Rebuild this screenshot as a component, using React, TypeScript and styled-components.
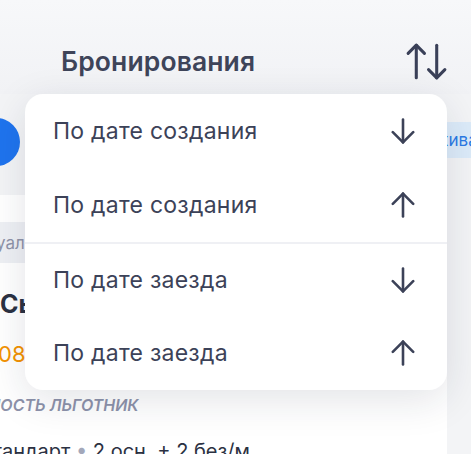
import styled, { createGlobalStyle } from 'styled-components'
import { ArrowUpDown } from 'lucide-react'

const GlobalStyle = createGlobalStyle`
  html, body {
    margin: 0;
    padding: 0;
  }
  body {
    background: #f4f5f7;
    font-family: Inter, 'Noto Sans', sans-serif;
    -webkit-font-smoothing: antialiased;
  }
`

const Screen = styled.div`
  position: relative;
  width: 471px;
  height: 454px;
  overflow: hidden;
  background: #f3f4f6;
`

const Header = styled.header`
  height: 94px;
  box-sizing: border-box;
  padding: 28px 20px 0 61px;
  display: flex;
  align-items: center;
  justify-content: space-between;
  background: linear-gradient(#f7f8fa, #f1f2f5);
`

const Title = styled.h1`
  margin: 0;
  font-size: 26.5px;
  font-weight: 600;
  letter-spacing: 0.1px;
  color: #3e4459;
`

const SortButton = styled.button`
  border: 0;
  padding: 0;
  background: none;
  color: #3a4058;
  display: flex;
`

const FilterRow = styled.div`
  height: 96px;
  display: flex;
  align-items: center;
  justify-content: space-between;
`

const Avatar = styled.div`
  width: 48px;
  height: 48px;
  margin-left: -28px;
  border-radius: 50%;
  background: #1f74ee;
`

const Chip = styled.div`
  height: 36px;
  display: flex;
  align-items: center;
  padding: 0 12px;
  margin-right: -41px;
  margin-top: -4px;
  border-radius: 10px;
  background: #dcebf9;
  color: #2c7be5;
  font-size: 17px;
  white-space: nowrap;
`

const Card = styled.section`
  width: 447px;
  margin-top: 5px;
  padding-top: 27px;
  background: #fff;
  overflow: hidden;
`

const GroupLabel = styled.div`
  height: 41px;
  display: flex;
  align-items: center;
  background: #eef0f4;
  color: #8e93a8;
  font-size: 17px;
  white-space: nowrap;
`

const Body = styled.div`
  padding-top: 24px;
  display: flex;
  flex-direction: column;
  white-space: nowrap;
`

const Shifted = styled.span<{ $shift: number }>`
  margin-left: ${(p) => p.$shift}px;
`

const Dot = styled.span`
  color: #a3a8ba;
`

const Name = styled.div`
  font-size: 25px;
  line-height: 34px;
  font-weight: 700;
  color: #2b3142;
`

const Time = styled.div`
  margin-top: 19px;
  font-size: 22px;
  line-height: 28px;
  color: #f39200;
`

const Tag = styled.div`
  margin-top: 26px;
  font-size: 16px;
  line-height: 22px;
  font-weight: 600;
  font-style: italic;
  text-transform: uppercase;
  color: #8d92aa;
`

const Spec = styled.div`
  margin-top: 21px;
  font-size: 20px;
  line-height: 28px;
  color: #2b3142;
`

const Menu = styled.ul`
  position: absolute;
  left: 25px;
  top: 94px;
  width: 422px;
  margin: 0;
  padding: 0;
  list-style: none;
  background: #fff;
  border-radius: 18px;
  box-shadow: 0 10px 40px rgba(28, 36, 56, 0.12);
  overflow: hidden;
`

const MenuItem = styled.li<{ $separated?: boolean }>`
  height: 74px;
  box-sizing: border-box;
  padding: 0 32px 0 28px;
  display: flex;
  align-items: center;
  justify-content: space-between;
  font-size: 23px;
  letter-spacing: 0.25px;
  color: #3c4258;
  border-top: ${(p) => (p.$separated ? '2px solid #eff0f4' : '0')};
`

function Arrow({ up }: { up?: boolean }) {
  return (
    <svg
      width="24"
      height="26"
      viewBox="0 0 24 26"
      fill="none"
      stroke="#3c4258"
      strokeWidth="2.6"
      strokeLinecap="round"
      strokeLinejoin="round"
      style={up ? { transform: 'rotate(180deg)' } : undefined}
    >
      <path d="M12 1.5v23" />
      <path d="M1.8 14.2 12 24.4l10.2-10.2" />
    </svg>
  )
}

const options = [
  { label: 'По дате создания', up: false },
  { label: 'По дате создания', up: true },
  { label: 'По дате заезда', up: false },
  { label: 'По дате заезда', up: true },
]

export default function App() {
  return (
    <Screen>
      <GlobalStyle />
      <Header>
        <Title>Бронирования</Title>
        <SortButton>
          <ArrowUpDown size={49} strokeWidth={1.5} />
        </SortButton>
      </Header>
      <FilterRow>
        <Avatar />
        <Chip>Проживают</Chip>
      </FilterRow>
      <Card>
        <GroupLabel>
          <Shifted $shift={-78}>Индивидуальная</Shifted>
        </GroupLabel>
        <Body>
          <Name>Сычёва Анна</Name>
          <Time>
            <Shifted $shift={-2}>08:00 – 12:00</Shifted>
          </Time>
          <Tag>
            <Shifted $shift={-80}>Особенность льготник</Shifted>
          </Tag>
          <Spec>
            <Shifted $shift={-22}>
              Стандарт <Dot>•</Dot> 2 осн. + 2 без/м
            </Shifted>
          </Spec>
        </Body>
      </Card>
      <Menu>
        {options.map((o, i) => (
          <MenuItem key={i} $separated={i === 2}>
            {o.label}
            <Arrow up={o.up} />
          </MenuItem>
        ))}
      </Menu>
    </Screen>
  )
}
